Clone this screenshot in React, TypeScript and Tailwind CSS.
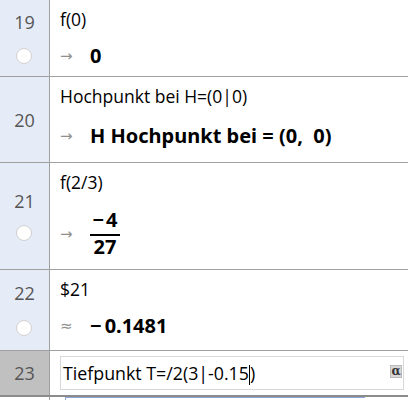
import React from "react";

const inFont = { fontFamily: '"Open Sans", "Noto Sans", sans-serif' };
const outFont = { fontFamily: '"Noto Sans", "DejaVu Sans", sans-serif' };

function Circle() {
  return <span className="block w-[16px] h-[16px] rounded-full bg-white border border-[#d0d0d0]" />;
}

function Arrow({ sym = "→" }: { sym?: string }) {
  return (
    <span
      className="w-[30px] shrink-0 text-[15px] text-[#8f8f8f] leading-[24px]"
      style={{ fontFamily: '"DejaVu Sans", sans-serif' }}
    >
      {sym}
    </span>
  );
}

interface RowProps {
  num: number;
  h: string;
  input: string;
  children: React.ReactNode;
  numTop: string;
  circleTop?: string;
}

function Row({ num, h, input, children, numTop, circleTop }: RowProps) {
  return (
    <div className={`flex ${h} border-b border-[#a0a0a0]`}>
      <div className="relative w-[50px] shrink-0 bg-[#e6ecf7] border-r border-[#a0a0a0]">
        <span className={`absolute left-0 right-0 text-center text-[18px] leading-[24px] text-[#555] ${numTop}`}>{num}</span>
        {circleTop && (
          <span className={`absolute left-[16px] ${circleTop}`}>
            <Circle />
          </span>
        )}
      </div>
      <div className="flex-1 pl-[10px] flex flex-col">
        <div className="text-[17.5px] text-black leading-[24px] pt-[7px]">{input}</div>
        {children}
      </div>
    </div>
  );
}

export default function App() {
  return (
    <div className="w-[408px] h-[400px] bg-white overflow-hidden" style={inFont}>
      <Row num={19} h="h-[77px]" input="f(0)" numTop="top-[10px]" circleTop="top-[48px]">
        <div className="flex items-center mt-[13px]">
          <Arrow />
          <span className="text-[20px] font-bold leading-[24px]" style={outFont}>0</span>
        </div>
      </Row>
      <Row num={20} h="h-[86px]" input="Hochpunkt bei H=(0|0)" numTop="top-[31px]">
        <div className="flex items-center mt-[16px]">
          <Arrow />
          <span className="text-[20px] font-bold leading-[24px] whitespace-pre" style={outFont}>
            H Hochpunkt bei = (0,  0)
          </span>
        </div>
      </Row>
      <Row num={21} h="h-[107px]" input="f(2/3)" numTop="top-[26px]" circleTop="top-[62px]">
        <div className="flex items-center mt-[16px]">
          <Arrow />
          <span className="flex flex-col items-center text-[20px] font-bold leading-[20px]" style={outFont}>
            <span className="pb-[4px]">
              <span className="mr-[2px]">−</span>4
            </span>
            <span className="block w-[30px] h-[2px] bg-black" />
            <span className="pt-[1px]">27</span>
          </span>
        </div>
      </Row>
      <Row num={22} h="h-[81px]" input="$21" numTop="top-[11px]" circleTop="top-[50px]">
        <div className="flex items-center mt-[13px]">
          <Arrow sym="≈" />
          <span className="text-[20px] font-bold leading-[24px]" style={outFont}>
            <span className="mr-[3px]">−</span>0.1481
          </span>
        </div>
      </Row>
      <div className="flex h-[46px] border-b-2 border-[#8c8c8c]">
        <div className="w-[50px] shrink-0 bg-[#c0c0c0] border-r border-[#a0a0a0] flex items-center justify-center text-[18px] text-[#555]">
          23
        </div>
        <div className="flex-1 flex items-center pl-[10px] pr-[4px]">
          <div className="relative flex items-center w-full h-[34px] bg-white border border-[#d8d8d8]">
            <span className="pl-[2px] text-[17.8px] text-black whitespace-pre">
              Tiefpunkt T=/2(3|-0.15<span className="inline-block w-[1px] h-[20px] bg-black align-middle" />)
            </span>
            <span className="absolute right-[1px] top-[8px] w-[12px] h-[13px] bg-[#d8d8d8] border border-[#bbb] text-[12px] leading-[11px] text-center font-bold text-[#333]" style={{ fontFamily: '"DejaVu Serif", serif' }}>
              α
            </span>
          </div>
        </div>
      </div>
      <div className="flex h-[4px]">
        <div className="w-[50px] border-r border-[#a0a0a0]" />
        <div className="ml-[15px] w-[300px] border-t border-l border-[#8aa5d8]" />
      </div>
    </div>
  );
}
